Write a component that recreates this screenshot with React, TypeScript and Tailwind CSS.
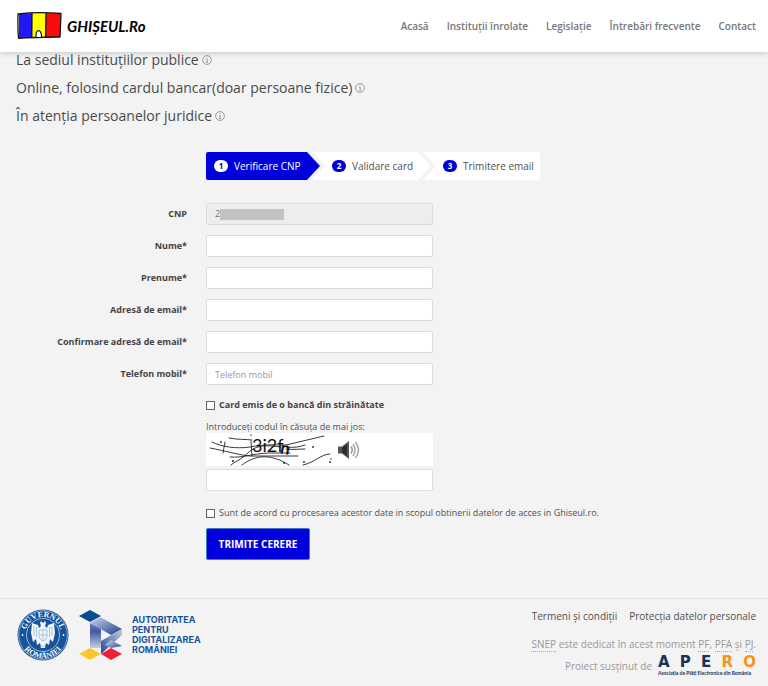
import React from "react";

const navItems = ["Acasă", "Instituții înrolate", "Legislație", "Întrebări frecvente", "Contact"];

const options = [
  "La sediul instituțiilor publice",
  "Online, folosind cardul bancar(doar persoane fizice)",
  "În atenția persoanelor juridice",
];

const fields = [
  { id: "nume", label: "Nume*", type: "text", placeholder: "" },
  { id: "prenume", label: "Prenume*", type: "text", placeholder: "" },
  { id: "email", label: "Adresă de email*", type: "email", placeholder: "" },
  { id: "email2", label: "Confirmare adresă de email*", type: "email", placeholder: "" },
  { id: "telefon", label: "Telefon mobil*", type: "tel", placeholder: "Telefon mobil" },
];

const inputClass =
  "block h-[22px] w-[227px] max-w-full rounded-xs border border-[#dcdcdc] bg-white px-2 text-[9px] text-[#555] outline-none placeholder:text-[#999]";
const rowClass = "grid grid-cols-[minmax(0,171fr)_minmax(0,546fr)] items-center gap-x-[19px]";
const labelClass = "text-right text-[9px] leading-4 font-bold text-[#444]";
const boxClass = "size-[9px] shrink-0 appearance-none border border-[#666] bg-white checked:bg-[#0000dc]";

function FlagLogo() {
  return (
    <svg width="46" height="28" viewBox="0 0 46 28" aria-hidden="true">
      <path d="M2 2 L16 1 L15.500 26 L2 26 Z" fill="#2019f4" />
      <path d="M15 1 H29 V25 L15 26 Z" fill="#ffff05" />
      <path d="M29 1 L43.500 1.500 L43 25 L29 25.500 Z" fill="#f80c0c" />
      <path d="M1 2 C12 .7 32 .6 44 1.500 L43 25 C30 24.800 15 25.700 1.500 26.300 C.8 18 .8 10 1 2 Z M15 1.500 L14.800 25.500 M29 1 L28.700 25" fill="none" stroke="#17110c" strokeWidth="1.300" strokeLinejoin="round" />
      <path d="M19 25 C18 16.500 25 16.500 24.500 25" fill="#fff" stroke="#17110c" strokeWidth="1.200" />
    </svg>
  );
}

function InfoIcon() {
  return (
    <svg width="10" height="10" viewBox="0 0 10 10" fill="none" stroke="#858585" strokeWidth=".8" role="img" aria-label="Informații">
      <circle cx="5" cy="5" r="4.400" />
      <path d="M4.200 4.200 H5.200 V7.200 M4 7.300 H6.200 M4.700 2.500 H5.400" />
    </svg>
  );
}

function Captcha() {
  return (
    <svg width="128" height="33" viewBox="0 0 128 33" fill="none" stroke="#222" strokeWidth=".9" strokeLinecap="round" role="img" aria-label="Cod de verificare">
      <path d="M6 9 C16 14 30 16 44 14 C60 11 64 12 80 12 L118 3" />
      <path d="M4 15 C20 18 33 22 44 23 H92" />
      <path d="M23 5 C32 7 40 6 46 7 M80 14 C88 15 93 14 99 12 M80 16 C88 17 93 16 99 16" />
      <path d="M24 24 C38 25 44 21 62 20 H84 M25 32 C31 27 34 28 44 18 C52 12 60 12 75 14" />
      <path d="M36 32 C50 21 66 21 83 32 M97 32 C110 29 115 21 124 21 M19 9 L17 20 M45 8 L46 23" />
      <g fill="#111" stroke="none" fontFamily="Lato, sans-serif">
        <text x="46" y="19" fontSize="18">3i2f</text>
        <text x="74" y="21" fontSize="17" fontWeight="700" transform="rotate(12 79 18)">n</text>
      </g>
      <g fill="#222" stroke="none">
        <circle cx="15" cy="9" r=".9" /><circle cx="45" cy="2" r=".7" />
        <circle cx="27" cy="28" r="1" /><circle cx="107" cy="14" r=".9" />
        <circle cx="98" cy="29" r=".9" /><circle cx="124" cy="29" r=".9" />
        <circle cx="125" cy="26" r=".7" /><circle cx="78" cy="30" r=".9" />
      </g>
    </svg>
  );
}

function SpeakerIcon() {
  return (
    <svg width="22" height="20" viewBox="0 0 22 20" fill="none" aria-hidden="true">
      <path d="M0 6.500 H4 L11 1 V19 L4 13.500 H0 Z" fill="#555" />
      <path d="M4 8 L9 4 V16 L4 12 Z" fill="#2c2c2c" />
      <path d="M13 6.500 Q15.500 10 13 13.500" stroke="#999" strokeWidth="1.600" />
      <path d="M15 4 Q19 10 15 16" stroke="#aaa" strokeWidth="1.600" />
      <path d="M17.500 2 Q23.500 10 17.500 18" stroke="#aaa" strokeWidth="1.600" />
    </svg>
  );
}

function GovernmentSeal() {
  return (
    <svg width="52" height="52" viewBox="0 0 52 52" role="img" aria-label="Guvernul României">
      <defs>
        <path id="seal-top" d="M8 26 A18 18 0 0 1 44 26" />
        <path id="seal-bottom" d="M2.700 26 A23.300 23.300 0 0 0 49.300 26" />
      </defs>
      <circle cx="26" cy="26" r="25.500" fill="#15539a" />
      <circle cx="26" cy="26" r="24.300" fill="none" stroke="#d6e3f0" strokeWidth=".6" />
      <circle cx="26" cy="26" r="16.500" fill="none" stroke="#d6e3f0" strokeWidth=".7" />
      <g fill="#f3f6fa" fontFamily="Liberation Serif, serif" fontSize="8" fontWeight="700" textAnchor="middle">
        <text><textPath href="#seal-top" startOffset="50%">GUVERNUL</textPath></text>
        <text><textPath href="#seal-bottom" startOffset="50%">ROMÂNIEI</textPath></text>
      </g>
      <circle cx="5.500" cy="26" r=".9" fill="#fff" />
      <circle cx="46.500" cy="26" r=".9" fill="#fff" />
      <path d="M23 14 L24 12 L26 14 L28 12 L29 14 L28 17 L30 19 L31 16 L37 14 L38 24 L36 33 L33 30 L32 36 L29 34 L28 39 H24 L23 34 L20 36 L19 30 L16 33 L14 24 L15 14 L21 16 L22 19 L24 17 Z" fill="#f1f5fa" />
      <path d="M17 17 V27 M19.500 18 V28 M35 17 V27 M32.500 18 V28 M22 21 H30 V28 Q29 31 26 32 Q23 31 22 28 Z M26 21 V32 M22 26 H30 M23 35 L26 38 L29 35" fill="none" stroke="#7fa1c8" strokeWidth=".6" />
    </svg>
  );
}

function AdrLogo() {
  return (
    <svg width="43" height="51" viewBox="0 0 43 51" aria-hidden="true">
      <defs>
        <linearGradient id="adr-left" x1="0" y1="0" x2="0" y2="1"><stop stopColor="#6f7fb7" /><stop offset=".35" stopColor="#435a9f" /><stop offset="1" stopColor="#c8cde4" /></linearGradient>
        <linearGradient id="adr-top" x1="0" y1="0" x2="1" y2="1"><stop stopColor="#d2d7eb" /><stop offset="1" stopColor="#173d91" /></linearGradient>
        <linearGradient id="adr-mid" x1="1" y1="0" x2="0" y2="1"><stop stopColor="#c5cbe2" /><stop offset="1" stopColor="#294591" /></linearGradient>
        <linearGradient id="adr-leg" x1="0" y1="0" x2="1" y2="1"><stop stopColor="#d8dcee" /><stop offset="1" stopColor="#294791" /></linearGradient>
      </defs>
      <path d="M11 0 L22 6 L11 12 L0 6 Z" fill="#074b91" />
      <path d="M11 13 L22 19 V38 L11 38 Z" fill="url(#adr-left)" />
      <path d="M11 13 L21 7 L43 19 L32 25 Z" fill="url(#adr-top)" />
      <path d="M43 19 V25 L22 44 V31 Z" fill="url(#adr-mid)" />
      <path d="M32 30 L43 36 L32 38 L26 35 Z" fill="url(#adr-leg)" />
      <path d="M11 38 L22 44 L11 50 L0 44 Z" fill="#ffc52d" />
      <path d="M32 38 L43 44 L32 50 L22 44 Z" fill="#ec2034" />
    </svg>
  );
}

function StepNumber({ n, active }: { n: number; active?: boolean }) {
  return (
    <span className={active
      ? "flex h-3 w-[14px] items-center justify-center rounded-full bg-white text-[8px] font-bold text-[#0000dc]"
      : "flex h-3 w-[14px] items-center justify-center rounded-full bg-[#0000dc] text-[8px] font-bold text-white"}>
      {n}
    </span>
  );
}

export default function App() {
  return (
    <div className="min-h-screen bg-[#f3f3f3] font-['Open_Sans','Noto_Sans',sans-serif] text-[#505050]">
      <header className="flex h-[52px] items-center justify-between bg-white pr-3 pl-[17px] shadow-[0_1px_6px_rgba(0,0,0,0.2)]">
        <a href="#" className="flex items-center gap-1 text-black" aria-label="Ghișeul.ro">
          <FlagLogo />
          <span className="font-[Lato] text-[15px] leading-6 font-bold italic">GHIȘEUL.Ro</span>
        </a>
        <nav className="flex items-center gap-[18px] text-[10px] leading-4 font-semibold text-[#777]">
          {navItems.map((item) => <a href="#" key={item}>{item}</a>)}
        </nav>
      </header>

      <main className="px-4">
        <ul className="flex flex-col gap-3 text-[14px] leading-4 text-[#4a4a4a]">
          {options.map((option) => (
            <li key={option} className="flex items-center gap-[3px]">
              <a href="#">{option}</a>
              <InfoIcon />
            </li>
          ))}
        </ul>

        <form className="mt-7 pb-[38px]" onSubmit={(e) => e.preventDefault()}>
          <div className={rowClass}>
            <ol className="col-start-2 flex h-7 text-[10px] leading-4 whitespace-nowrap">
              <li className="z-20 flex w-[114px] items-center gap-1.5 rounded-l-xs bg-[#0000dc] pl-2 text-white [clip-path:polygon(0_0,101px_0,100%_50%,101px_100%,0_100%)]">
                <StepNumber n={1} active />Verificare CNP
              </li>
              <li className="-ml-2 flex w-[119px] items-center gap-1.5 bg-white pl-5 [clip-path:polygon(0_0,106px_0,100%_50%,106px_100%,0_100%,13px_50%)]">
                <StepNumber n={2} />Validare card
              </li>
              <li className="-ml-2 flex w-[117px] items-center gap-1.5 rounded-r-xs bg-white pl-5 [clip-path:polygon(0_0,100%_0,100%_100%,0_100%,13px_50%)]">
                <StepNumber n={3} />Trimitere email
              </li>
            </ol>
          </div>

          <div className="mt-[23px] flex flex-col gap-[10px]">
            <div className={rowClass}>
              <label htmlFor="cnp" className={labelClass}>CNP</label>
              <div className="flex h-[22px] w-[227px] max-w-full items-center rounded-xs border border-[#dcdcdc] bg-[#ededed] pl-2">
                <input id="cnp" readOnly value="2" className="w-[5px] bg-transparent text-[9px] text-[#777] outline-none" />
                <span className="h-[11px] w-16 bg-[#c3c3c3]" />
              </div>
            </div>
            {fields.map((f) => (
              <div className={rowClass} key={f.id}>
                <label htmlFor={f.id} className={labelClass}>{f.label}</label>
                <input id={f.id} type={f.type} placeholder={f.placeholder} className={inputClass} />
              </div>
            ))}
          </div>

          <div className={rowClass}>
            <div className="col-start-2 text-[9px] leading-4">
              <label className="mt-3 flex items-center gap-1 font-bold text-[#444]">
                <input type="checkbox" className={boxClass} />
                Card emis de o bancă din străinătate
              </label>
              <label htmlFor="captcha" className="mt-2 block leading-3">Introduceți codul în căsuța de mai jos:</label>
              <div className="flex h-[33px] w-[227px] max-w-full items-center gap-1 bg-white">
                <Captcha />
                <button type="button" aria-label="Ascultă codul"><SpeakerIcon /></button>
              </div>
              <div className="mt-[3px]"><input id="captcha" className={inputClass} /></div>
              <label className="mt-[14px] flex items-center gap-1">
                <input type="checkbox" className={boxClass} />
                Sunt de acord cu procesarea acestor date in scopul obtinerii datelor de acces in Ghiseul.ro.
              </label>
              <button type="submit" className="mt-[7px] h-8 w-[104px] rounded-xs border border-[#3c78c8] bg-[#0000dc] text-[10px] font-bold text-white">TRIMITE CERERE</button>
            </div>
          </div>
        </form>
      </main>

      <footer className="flex justify-between border-t border-[#e3e3e3] pt-[9px] pr-3 pl-[17px]">
        <div className="mt-px flex h-[52px] items-center gap-[10px]">
          <GovernmentSeal />
          <div className="flex items-center gap-[10px]">
            <AdrLogo />
            <p className="font-[Inter] text-[9px] leading-[10px] font-bold text-[#15539a]">AUTORITATEA<br />PENTRU<br />DIGITALIZAREA<br />ROMÂNIEI</p>
          </div>
        </div>
        <div className="flex flex-col items-end text-[10px] leading-4 text-[#999]">
          <nav className="flex gap-3 text-[#505050]">
            <a href="#">Termeni și condiții</a>
            <a href="#">Protecția datelor personale</a>
          </nav>
          <p className="mt-3">
            <abbr className="border-b border-dotted border-[#aaa] no-underline">SNEP</abbr> este dedicat în acest moment <abbr className="border-b border-dotted border-[#aaa] no-underline">PF</abbr>, <abbr className="border-b border-dotted border-[#aaa] no-underline">PFA</abbr> și <abbr className="border-b border-dotted border-[#aaa] no-underline">PJ</abbr>.
          </p>
          <div className="mt-[3px] flex items-center gap-1.5">
            <span>Proiect susținut de</span>
            <a href="#" className="flex w-[98px] flex-col gap-px text-[#193156]" aria-label="APERO">
              <span className="flex justify-between font-['DejaVu_Sans'] text-[15px] leading-[14px] font-bold">
                <span>A</span><span>P</span><span>E</span><span className="text-[#f7941d]">R</span><span className="text-[#f7941d]">O</span>
              </span>
              <span className="font-[Lato] text-[5px] leading-[6px] font-bold whitespace-nowrap">Asociația de Plăți Electronice din România</span>
            </a>
          </div>
        </div>
      </footer>
    </div>
  );
}
